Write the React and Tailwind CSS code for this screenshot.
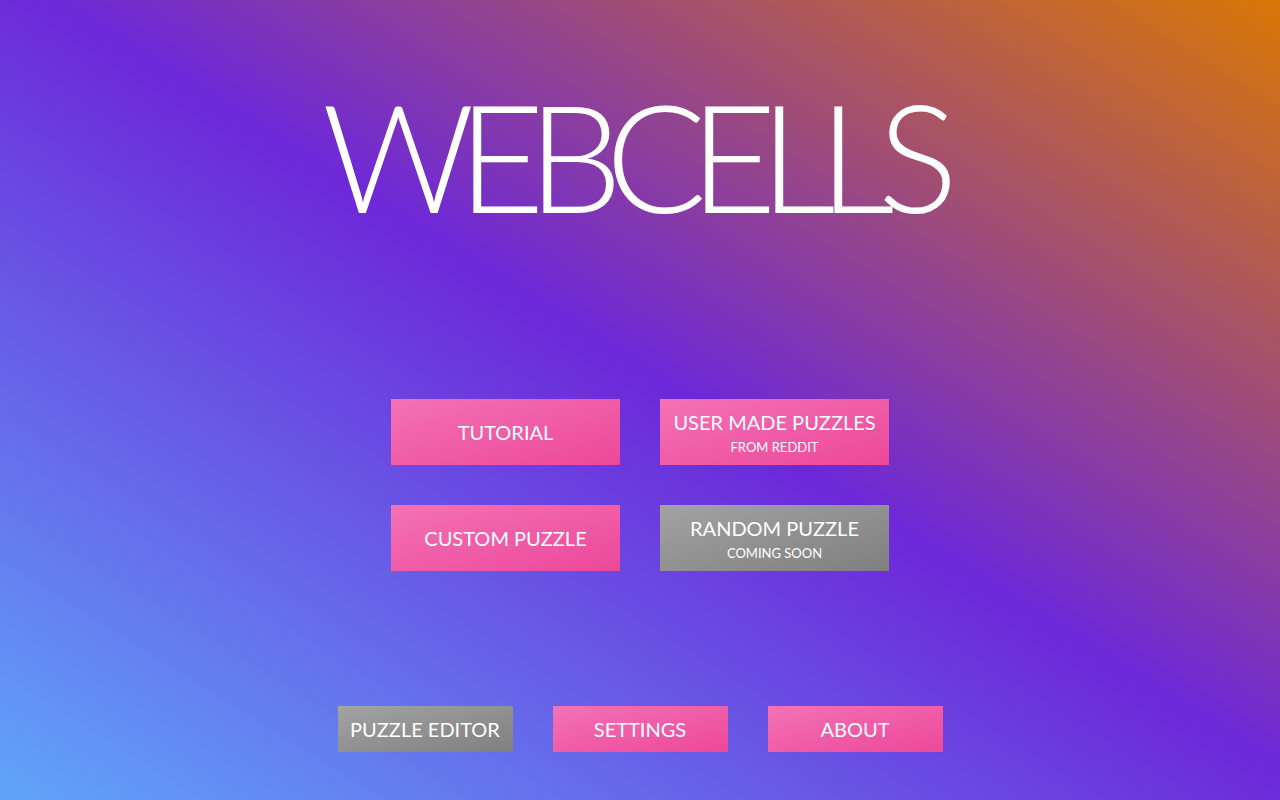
const pink = "bg-[linear-gradient(to_bottom_right,#f472b6,#ec4899)]";
const gray = "bg-[linear-gradient(to_bottom_right,#a3a3a3,#7f7f7f)]";

function MenuButton({ label, sub, disabled }) {
  return (
    <button
      className={`flex h-[66px] w-[229px] flex-col items-center justify-center text-white ${
        disabled ? gray : pink
      }`}
    >
      <span className="text-[20px] leading-6">{label}</span>
      {sub && <span className="mt-[5px] text-[13px] leading-4">{sub}</span>}
    </button>
  );
}

function SmallButton({ label, disabled }) {
  return (
    <button
      className={`flex h-[46px] w-[175px] items-center justify-center text-[20px] text-white ${
        disabled ? gray : pink
      }`}
    >
      {label}
    </button>
  );
}

export default function App() {
  return (
    <div className="flex h-[800px] w-full flex-col items-center bg-[linear-gradient(to_top_right,#60a5fa,#6d28d9_52%,#d97706)] font-['Lato',sans-serif]">
      {/* title */}
      <h1 className="mt-[80px] pr-[17px] text-[150px] font-light leading-[150px] tracking-[-17px] text-white">
        WEBCELLS
      </h1>

      {/* main menu */}
      <div className="mt-[169px] grid grid-cols-2 gap-10">
        <MenuButton label="TUTORIAL" />
        <MenuButton label="USER MADE PUZZLES" sub="FROM REDDIT" />
        <MenuButton label="CUSTOM PUZZLE" />
        <MenuButton label="RANDOM PUZZLE" sub="COMING SOON" disabled />
      </div>

      {/* footer */}
      <div className="mt-auto mb-[48px] flex gap-10">
        <SmallButton label="PUZZLE EDITOR" disabled />
        <SmallButton label="SETTINGS" />
        <SmallButton label="ABOUT" />
      </div>
    </div>
  );
}
